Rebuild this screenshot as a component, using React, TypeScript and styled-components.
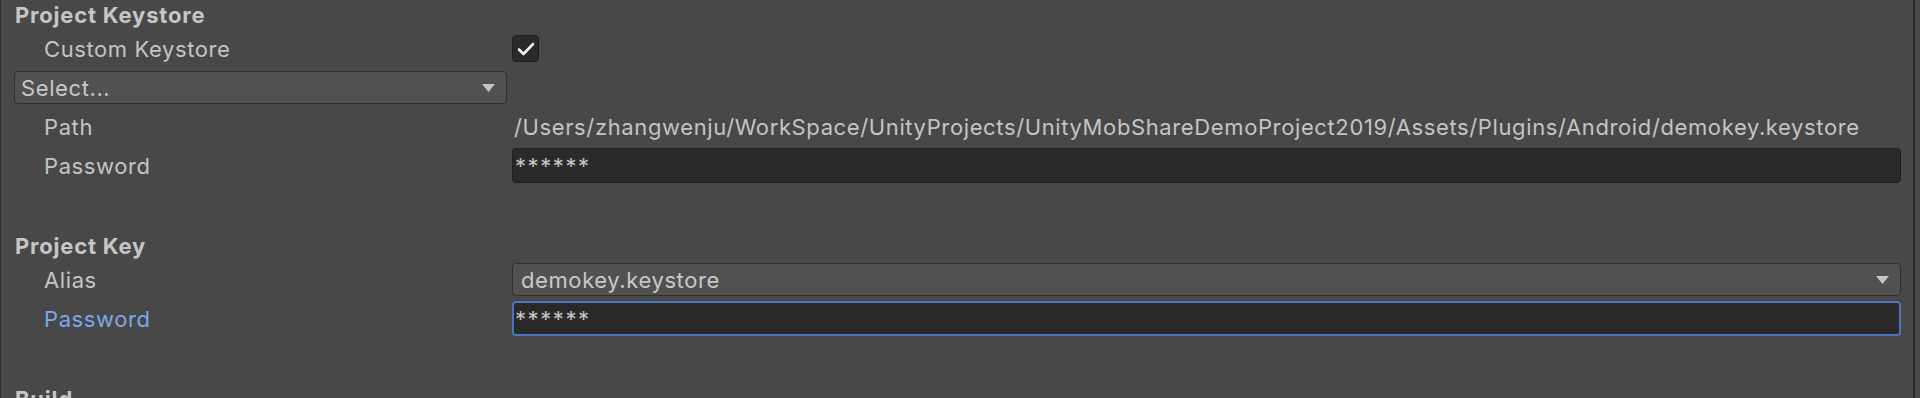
import React from "react";
import styled, { createGlobalStyle } from "styled-components";

const Global = createGlobalStyle`
  html, body {
    margin: 0;
    padding: 0;
    background: #484848;
    overflow: hidden;
  }
  body {
    font-family: Inter, "Noto Sans", "Liberation Sans", sans-serif;
    -webkit-font-smoothing: antialiased;
  }
`;

const Frame = styled.div`
  display: flex;
  width: 1920px;
  height: 398px;
  overflow: hidden;
  background: #484848;
`;

const Panel = styled.div`
  flex: 1;
  display: flex;
  flex-direction: column;
  border-left: 1px solid #2e2e2e;
  border-right: 2px solid #2a2a2a;
  padding: 0 12px 0 13px;
`;

const Gutter = styled.div`
  width: 5px;
  flex: none;
`;

const Section = styled.section`
  display: flex;
  flex-direction: column;
  margin-bottom: 46px;
`;

const Header = styled.div`
  height: 29px;
  display: flex;
  align-items: center;
  padding-left: 1px;
  font-size: 22px;
  font-weight: 700;
  color: #c6c6c6;
  letter-spacing: 0.8px;
`;

const Row = styled.div`
  height: 39px;
  display: grid;
  grid-template-columns: 498px 1fr;
  align-items: center;
`;

const Label = styled.div<{ $focused?: boolean }>`
  padding-left: 30px;
  font-size: 22px;
  letter-spacing: 0.6px;
  color: ${(p) => (p.$focused ? "#7ea6ea" : "#c4c4c4")};
  white-space: nowrap;
`;

const Value = styled.div`
  padding-left: 2px;
  font-size: 22px;
  letter-spacing: 0.62px;
  color: #c4c4c4;
  white-space: nowrap;
  overflow: hidden;
`;

const Checkbox = styled.div`
  width: 27px;
  height: 27px;
  box-sizing: border-box;
  border-radius: 4px;
  background: #2a2a2a;
  border: 1px solid #1e1e1e;
  display: flex;
  align-items: center;
  justify-content: center;
`;

const Dropdown = styled.div<{ $inset?: number }>`
  height: 33px;
  box-sizing: border-box;
  margin-right: ${(p) => p.$inset ?? 0}px;
  border-radius: 4px;
  background: #515151;
  border: 1px solid #2f2f2f;
  display: flex;
  align-items: center;
  justify-content: space-between;
  padding: 0 11px 0 6px;
  font-size: 22px;
  letter-spacing: 0.6px;
  color: #c8c8c8;
`;

const DropdownText = styled.span<{ $indent?: number }>`
  padding-left: ${(p) => p.$indent ?? 0}px;
`;

const Field = styled.div<{ $focused?: boolean }>`
  height: 35px;
  box-sizing: border-box;
  border-radius: 4px;
  background: #2a2a2a;
  border: ${(p) => (p.$focused ? "2px solid #4a74bd" : "1px solid #1f1f1f")};
  display: flex;
  align-items: center;
  padding-left: ${(p) => (p.$focused ? 1 : 2)}px;
  font-size: 22px;
  color: #c4c4c4;
  letter-spacing: 1.6px;
`;

const Arrow = () => (
  <svg width="13" height="8" viewBox="0 0 13 8">
    <polygon points="0,0 13,0 6.5,8" fill="#c4c4c4" />
  </svg>
);

const Check = () => (
  <svg width="18" height="14" viewBox="0 0 18 14">
    <polyline
      points="2,7.5 6.5,12 16,2"
      fill="none"
      stroke="#f2f2f2"
      strokeWidth="2.6"
      strokeLinecap="round"
      strokeLinejoin="round"
    />
  </svg>
);

export default function App() {
  return (
    <>
      <Global />
      <Frame>
        <Panel>
          <Section>
            <Header>Project Keystore</Header>
            <Row>
              <Label>Custom Keystore</Label>
              <Checkbox>
                <Check />
              </Checkbox>
            </Row>
            <Row>
              <Dropdown $inset={5}>
                <DropdownText>Select...</DropdownText>
                <Arrow />
              </Dropdown>
            </Row>
            <Row>
              <Label>Path</Label>
              <Value>
                /Users/zhangwenju/WorkSpace/UnityProjects/UnityMobShareDemoProject2019/Assets/Plugins/Android/demokey.keystore
              </Value>
            </Row>
            <Row>
              <Label>Password</Label>
              <Field>******</Field>
            </Row>
          </Section>
          <Section>
            <Header>Project Key</Header>
            <Row>
              <Label>Alias</Label>
              <Dropdown>
                <DropdownText $indent={2}>demokey.keystore</DropdownText>
                <Arrow />
              </Dropdown>
            </Row>
            <Row>
              <Label $focused>Password</Label>
              <Field $focused>******</Field>
            </Row>
          </Section>
          <Section>
            <Header>Build</Header>
          </Section>
        </Panel>
        <Gutter />
      </Frame>
    </>
  );
}
